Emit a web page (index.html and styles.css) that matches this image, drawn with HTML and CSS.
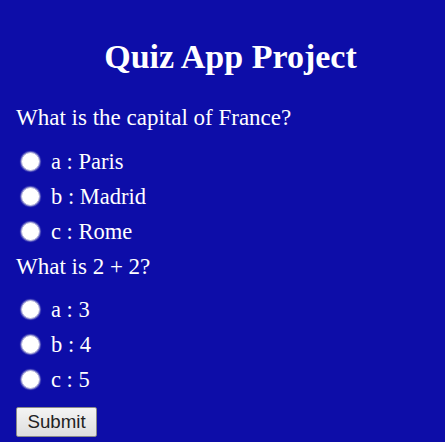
FILE: index.html
```html
<!DOCTYPE html>
<html>
<head>
<meta charset="utf-8">
<title>Quiz App Project</title>
<link rel="stylesheet" href="styles.css">
</head>
<body>
<div class="app">
  <h1 class="title">Quiz App Project</h1>
  <form class="quiz">
    <div class="question">
      <p class="q-text">What is the capital of France?</p>
      <div class="options">
        <label class="option"><input type="radio" name="q1" class="radio"><span>a : Paris</span></label>
        <label class="option"><input type="radio" name="q1" class="radio"><span>b : Madrid</span></label>
        <label class="option"><input type="radio" name="q1" class="radio"><span>c : Rome</span></label>
      </div>
    </div>
    <div class="question">
      <p class="q-text">What is 2 + 2?</p>
      <div class="options">
        <label class="option"><input type="radio" name="q2" class="radio"><span>a : 3</span></label>
        <label class="option"><input type="radio" name="q2" class="radio"><span>b : 4</span></label>
        <label class="option"><input type="radio" name="q2" class="radio"><span>c : 5</span></label>
      </div>
    </div>
    <button type="button" class="submit">Submit</button>
  </form>
</div>
</body>
</html>
```
FILE: styles.css
```css
html, body {
  margin: 0;
  padding: 0;
  background: #0d0da8;
}
body {
  font-family: "Liberation Serif", "Times New Roman", serif;
  font-size: 22.5px;
  color: #ffffff;
  height: 442px;
  overflow: hidden;
}
.app {
  padding: 38px 0 0 16px;
}
.title {
  margin: 0 0 24.5px 0;
  font-size: 34px;
  font-weight: bold;
  text-align: center;
  line-height: 37.6px;
}
.quiz {
  display: flex;
  flex-direction: column;
  align-items: flex-start;
}
.question {
  display: flex;
  flex-direction: column;
}
.q-text {
  margin: 0;
  font-size: 23px;
  line-height: 35px;
}
.options {
  display: flex;
  flex-direction: column;
  margin-top: 8.5px;
}
.option {
  display: flex;
  align-items: center;
  height: 35px;
  line-height: 35px;
}
.radio {
  appearance: none;
  -webkit-appearance: none;
  margin: 0 11px 0 5px;
  width: 19px;
  height: 19px;
  border-radius: 50%;
  background: #ffffff;
  border: 1px solid #b4b4dc;
  box-shadow: 0 0 1px 1px rgba(170, 170, 215, 0.55);
  box-sizing: border-box;
}
.submit {
  margin-top: 10px;
  height: 30px;
  padding: 0 10.5px;
  font-family: "Liberation Sans", Arial, sans-serif;
  font-size: 18.7px;
  color: #222222;
  background: linear-gradient(#f4f4f4, #dedede);
  border: 1px solid #8a8a8a;
  border-radius: 2px;
  box-sizing: border-box;
}
```
